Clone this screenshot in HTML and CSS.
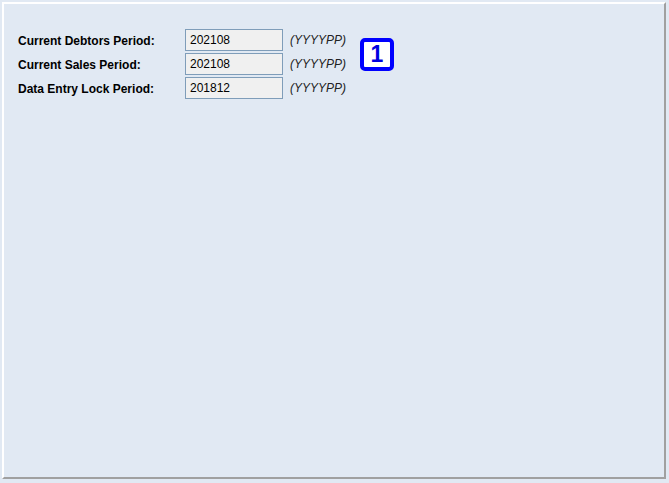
FILE: index.html
```html
<!DOCTYPE html>
<html>
<head>
<meta charset="utf-8">
<link rel="stylesheet" href="styles.css">
</head>
<body>
<div class="panel">
  <div class="form">
    <div class="label r1">Current Debtors Period:</div>
    <div class="field r1">202108</div>
    <div class="hint r1">(YYYYPP)</div>
    <div class="label r2">Current Sales Period:</div>
    <div class="field r2">202108</div>
    <div class="hint r2">(YYYYPP)</div>
    <div class="label r3">Data Entry Lock Period:</div>
    <div class="field r3">201812</div>
    <div class="hint r3">(YYYYPP)</div>
    <div class="badge">1</div>
  </div>
</div>
</body>
</html>
```
FILE: styles.css
```css
html, body {
  margin: 0;
  padding: 0;
  background: #e1e9f3;
  font-family: "Liberation Sans", Arial, sans-serif;
  font-size: 12px;
}
.panel {
  box-sizing: border-box;
  margin: 2px 3px 0 2px;
  height: 477px;
  border-style: solid;
  border-width: 2px;
  border-color: #ffffff #a0a0a0 #a0a0a0 #ffffff;
  padding: 25px 0 0 14px;
  background: #e1e9f3;
}
.form {
  display: grid;
  grid-template-columns: 167px 98px 70px auto;
  grid-template-rows: 22px 22px 22px;
  row-gap: 2px;
}
.r1 { grid-row: 1; }
.r2 { grid-row: 2; }
.r3 { grid-row: 3; }
.label {
  grid-column: 1;
  font-weight: bold;
  color: #000;
  display: flex;
  align-items: center;
  padding-top: 1px;
}
.field {
  grid-column: 2;
  box-sizing: border-box;
  border: 1px solid #7f9db9;
  background: #f0f0f0;
  color: #000;
  padding-left: 4px;
  display: flex;
  align-items: center;
}
.hint {
  grid-column: 3;
  font-style: italic;
  color: #222;
  padding-left: 7px;
  display: flex;
  align-items: center;
}
.badge {
  grid-column: 4;
  grid-row: 1 / 4;
  align-self: start;
  justify-self: start;
  margin-top: 9px;
  margin-left: 7px;
  box-sizing: border-box;
  width: 34px;
  height: 33px;
  border: 4px solid #0000ff;
  border-radius: 5px;
  background: #fff;
  color: #0000e0;
  font-weight: bold;
  font-size: 23px;
  line-height: 25px;
  text-align: center;
}
```
